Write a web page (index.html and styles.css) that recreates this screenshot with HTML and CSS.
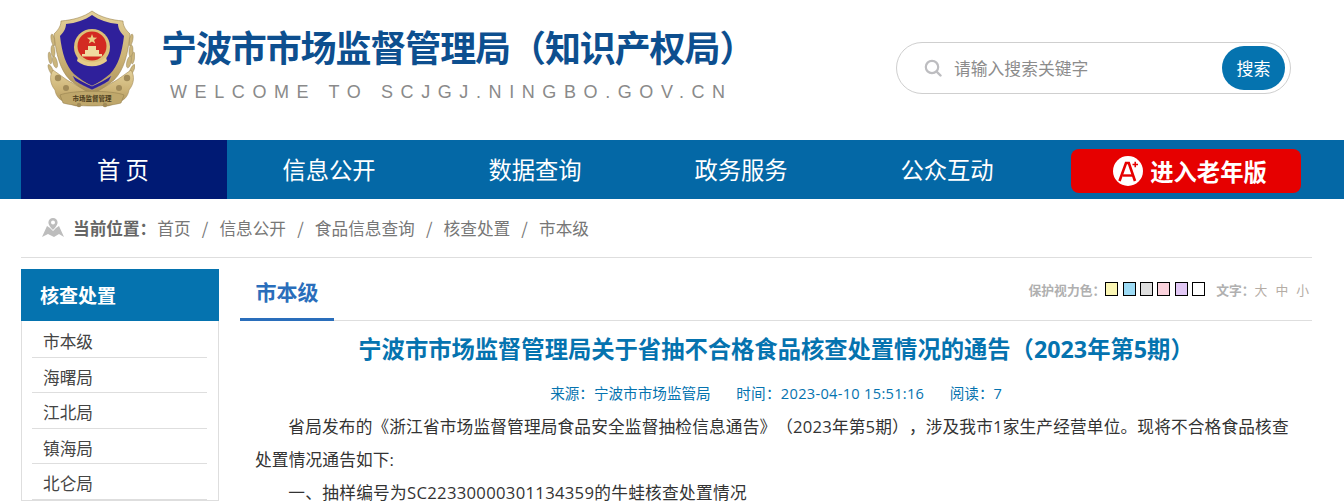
FILE: index.html
```html
<!DOCTYPE html>
<html lang="zh-CN">
<head>
<meta charset="utf-8">
<title>宁波市市场监督管理局（知识产权局）</title>
<link rel="stylesheet" href="styles.css">
</head>
<body>
<div class="page">
  <header class="header">
    <svg class="logo" viewBox="0 0 90 100" width="90" height="100" aria-hidden="true">
      <defs>
        <linearGradient id="gold" x1="0" y1="0" x2="0" y2="1">
          <stop offset="0" stop-color="#e3d09a"/><stop offset=".55" stop-color="#cdb477"/><stop offset="1" stop-color="#a98f58"/>
        </linearGradient>
      </defs>
      <g fill="#cbb57c" stroke="#8f7d50" stroke-width=".4">
        <ellipse cx="8" cy="30" rx="1.800" ry="6" transform="rotate(-12 8 30)"/>
        <ellipse cx="8" cy="41" rx="2" ry="6" transform="rotate(-4 8 41)"/>
        <ellipse cx="10" cy="52" rx="2.200" ry="6" transform="rotate(-14 10 52)"/>
        <ellipse cx="5" cy="48" rx="1.600" ry="6" transform="rotate(-8 5 48)"/>
        <ellipse cx="6" cy="60" rx="1.800" ry="6" transform="rotate(-25 6 60)"/>
        <ellipse cx="86" cy="30" rx="1.800" ry="6" transform="rotate(12 86 30)"/>
        <ellipse cx="86" cy="41" rx="2" ry="6" transform="rotate(4 86 41)"/>
        <ellipse cx="84" cy="52" rx="2.200" ry="6" transform="rotate(14 84 52)"/>
        <ellipse cx="88" cy="48" rx="1.600" ry="6" transform="rotate(8 88 48)"/>
        <ellipse cx="87" cy="60" rx="1.800" ry="6" transform="rotate(25 87 60)"/>
      </g>
      <path d="M8 60C4 66 5 74 10 80C11 87 16 92 23 92C29 97 35 97 39 94L55 94C59 97 65 97 71 92C78 92 83 87 84 80C89 74 90 66 86 60L72 70 47 84 22 70Z" fill="url(#gold)" stroke="#a28a55" stroke-width=".6"/>
      <path d="M47 1C39 7 28 10 16 11C16 17 12 21 9 24C11 44 15 60 25 70C32 76 41 81 47 84C53 81 62 76 69 70C79 60 83 44 85 24C82 21 78 17 78 11C66 10 55 7 47 1Z" fill="url(#gold)" stroke="#9c8450" stroke-width=".6"/>
      <path d="M47 5C40 10 31 13 21 14C21 19 18 23 15 26C17 43 21 56 29 64C35 69 41 73 47 76C53 73 59 69 65 64C73 56 77 43 79 26C76 23 73 19 73 14C63 13 54 10 47 5Z" fill="#2f209b"/>
      <circle cx="47" cy="37" r="18" fill="#dcc078"/>
      <circle cx="47" cy="36" r="14.500" fill="#d32a22"/>
      <path d="M47 24l1.300 3.600 3.800.1-3 2.300 1.100 3.600-3.200-2.100-3.200 2.100 1.100-3.600-3-2.300 3.800-.1Z" fill="#ecd083"/>
      <path d="M37 44h20v2.500H37zM40 40h14v4H40zM43 36h8v4h-8z" fill="#f0dba0"/>
      <path d="M33 47c7 7 21 7 28 0l1 4c-8 7-22 7-30 0z" fill="#e6cc88"/>
      <path d="M27 65c7 5 13 8 20 11 7-3 13-6 20-11l-3 6c-6 4-11 6-17 9-6-3-11-5-17-9z" fill="#2f209b" stroke="#d9c082" stroke-width=".5"/>
      <path d="M15 85c12-5 52-5 64 0l-3 8c-12 4-46 4-58 0z" fill="#bfa76b" stroke="#8f7a4b" stroke-width=".5"/>
      <text class="logo-text" x="47" y="90.500" text-anchor="middle">市场监督管理</text>
      <circle cx="13" cy="68" r="3.200" fill="#a08a58"/><circle cx="82" cy="68" r="3.200" fill="#a08a58"/>
      <circle cx="21" cy="78" r="3" fill="#a08a58"/><circle cx="74" cy="78" r="3" fill="#a08a58"/>
      <circle cx="34" cy="95" r="2.200" fill="#a08a58"/><circle cx="60" cy="95" r="2.200" fill="#a08a58"/>
    </svg>
    <div class="brand">
      <h1 class="brand-title">宁波市市场监督管理局（知识产权局）</h1>
      <p class="brand-sub">WELCOME TO SCJGJ.NINGBO.GOV.CN</p>
    </div>
    <form class="search">
      <svg class="search-icon" viewBox="0 0 18 18" width="18" height="18" aria-hidden="true">
        <circle cx="8" cy="8" r="6.200" fill="none" stroke="#bdbdc0" stroke-width="2.200"/>
        <path d="M12.500 12.500L16.500 16.500" stroke="#bdbdc0" stroke-width="2.400" stroke-linecap="round"/>
      </svg>
      <span class="search-text">请输入搜索关键字</span>
      <span class="search-btn">搜索</span>
    </form>
  </header>

  <nav class="nav">
    <div class="nav-inner">
      <a class="nav-item active">首 页</a>
      <a class="nav-item">信息公开</a>
      <a class="nav-item">数据查询</a>
      <a class="nav-item">政务服务</a>
      <a class="nav-item">公众互动</a>
      <a class="elder">
        <svg class="elder-icon" viewBox="0 0 30 30" width="30" height="30" aria-hidden="true">
          <circle cx="15" cy="15" r="15" fill="#fff"/>
          <path d="M6.500 25L13 7h2.800L22 25" fill="none" stroke="#e60000" stroke-width="2.600"/>
          <path d="M9.500 19.500h10" stroke="#e60000" stroke-width="2.400"/>
          <path d="M19.500 8.500h5.500M22.250 5.750v5.500" stroke="#e60000" stroke-width="1.600"/>
        </svg>
        <span>进入老年版</span>
      </a>
    </div>
  </nav>

  <div class="wrap">
    <div class="crumbs">
      <svg class="crumb-icon" viewBox="0 0 22 20" width="22" height="20" aria-hidden="true">
        <path d="M0 19L5 8l3 2 2 2 1 1 3-3 3-2 5 11-5-3-5 3-6-3z" fill="#bdbdbd"/>
        <path d="M11 0a4.600 4.600 0 0 0-4.600 4.600C6.400 8 11 12 11 12s4.600-4 4.600-7.400A4.600 4.600 0 0 0 11 0zm0 6.600a2 2 0 1 1 0-4 2 2 0 0 1 0 4z" fill="#bdbdbd"/>
      </svg>
      <b class="crumb-label">当前位置：</b>
      <span>首页</span><i>/</i><span>信息公开</span><i>/</i><span>食品信息查询</span><i>/</i><span>核查处置</span><i>/</i><span>市本级</span>
    </div>

    <div class="columns">
      <aside class="side">
        <h2 class="side-head">核查处置</h2>
        <ul class="side-list">
          <li>市本级</li>
          <li>海曙局</li>
          <li>江北局</li>
          <li>镇海局</li>
          <li>北仑局</li>
        </ul>
      </aside>
      <main class="main">
        <div class="tabbar">
          <span class="tab">市本级</span>
          <div class="tools">
            <b>保护视力色：</b>
            <span class="swatches">
              <i class="sw sw-y"></i><i class="sw sw-b"></i><i class="sw sw-g"></i><i class="sw sw-p"></i><i class="sw sw-v"></i><i class="sw sw-w"></i>
            </span>
            <b class="font-label">文字：</b>
            <span class="sizes"><span>大</span><span>中</span><span>小</span></span>
          </div>
        </div>
        <h3 class="title">宁波市市场监督管理局关于省抽不合格食品核查处置情况的通告（2023年第5期）</h3>
        <p class="meta"><span>来源：宁波市市场监管局</span><span class="meta-time">时间：2023-04-10 15:51:16</span><span>阅读：7</span></p>
        <div class="body">
          <p>省局发布的《浙江省市场监督管理局食品安全监督抽检信息通告》（2023年第5期），涉及我市1家生产经营单位。现将不合格食品核查处置情况通告如下:</p>
          <p>一、抽样编号为SC22330000301134359的牛蛙核查处置情况</p>
        </div>
      </main>
    </div>
  </div>
</div>
</body>
</html>
```
FILE: styles.css
```css
* { box-sizing: border-box; }
html, body { margin: 0; padding: 0; }
body { font-family: "Noto Sans CJK SC", "Liberation Sans", sans-serif; background: #fff; color: #333; text-spacing-trim: space-all; }
.page { height: 502px; overflow: hidden; }
h1, h2, h3, p, ul { margin: 0; padding: 0; }
ul { list-style: none; }
i { font-style: normal; }

.header { height: 140px; display: flex; align-items: flex-start; padding-left: 45px; }
.logo { margin-top: 10px; flex: none; }
.logo-text { font-size: 6.500px; fill: #4b3c1c; font-weight: 700; }
.brand { margin-left: 26px; margin-top: 22px; width: 622px; }
.brand-title { font-size: 36px; line-height: 48px; font-weight: 700; color: #0d4f8f; letter-spacing: -1.100px; white-space: nowrap; }
.brand-sub { margin-top: 12px; margin-left: 9px; font-family: "Liberation Sans", sans-serif; font-size: 18px; line-height: 20px; letter-spacing: 7.600px; color: #8a8a8a; white-space: nowrap; }
.search { margin-left: 113px; margin-top: 42px; width: 395px; height: 52px; border: 1px solid #cfcfcf; border-radius: 26px; display: flex; align-items: center; padding: 0 5px 0 27px; }
.search-icon { flex: none; }
.search-text { margin-left: 12px; flex: 1; font-size: 16.800px; color: #8c8c8c; }
.search-btn { width: 63px; height: 44px; border-radius: 22px; background: #0573af; color: #fff; font-size: 17px; text-align: center; line-height: 44px; }

.nav { height: 59px; background: #0468a6; }
.nav-inner { height: 100%; padding-left: 21px; display: flex; align-items: center; }
.nav-item { width: 206px; height: 100%; color: #fff; font-size: 23.300px; line-height: 59px; text-align: center; padding-right: 2px; }
.nav-item.active { background: #001a74; }
.elder { margin: 2px 0 0 20px; width: 230px; height: 44px; background: #e60000; border-radius: 8px; color: #fff; font-size: 23.300px; font-weight: 700; display: flex; align-items: center; justify-content: center; gap: 7px; padding-left: 8px; }
.elder-icon { flex: none; }

.wrap { padding-left: 21px; width: 1312px; }
.crumbs { height: 59px; border-bottom: 1px solid #dedede; display: flex; align-items: center; padding-left: 21px; font-size: 16.670px; color: #777; }
.crumb-icon { flex: none; margin-right: 9px; }
.crumb-label { color: #666; font-weight: 700; margin-right: 1px; }
.crumbs i { margin: 0 11.150px; }

.columns { display: flex; margin-top: 11px; align-items: flex-start; }
.side { width: 198px; flex: none; }
.side-head { height: 52px; background: #0573af; color: #fff; font-size: 19px; line-height: 52px; font-weight: 700; padding-left: 19px; }
.side-list { border: 1px solid #dedede; border-top: 0; padding: 1px 11px 0 10px; }
.side-list li { height: 35.500px; padding-top: 2px; line-height: 34px; border-bottom: 1px solid #dedede; font-size: 16.670px; color: #444; padding-left: 11px; }

.main { margin-left: 21px; width: 1072px; font-family: "Open Sans", "Noto Sans CJK SC", sans-serif; }
.tabbar { height: 52px; border-bottom: 1px solid #dedede; display: flex; justify-content: space-between; }
.tab { width: 94px; height: 52px; border-bottom: 3px solid #2a6ebb; color: #2a6ebb; font-size: 21px; font-weight: 700; text-align: center; line-height: 46px; }
.tools { display: flex; align-items: center; height: 40px; font-size: 12.800px; color: #b0b0b0; padding-right: 3px; }
.tools b { font-weight: 700; }
.swatches { display: flex; gap: 4.400px; }
.sw { width: 13px; height: 14px; border: 1px solid #000; display: block; }
.sw-y { background: #fbf6b4; }
.sw-b { background: #9ddbf5; }
.sw-g { background: #dedede; }
.sw-p { background: #fad2dc; }
.sw-v { background: #e2c8f5; }
.sw-w { background: #fff; }
.font-label { margin-left: 11px; }
.sizes { display: flex; gap: 8px; color: #b5ada5; }

.title { margin-top: 10px; text-align: center; font-size: 23.300px; line-height: 36px; font-weight: 700; color: #0573af; white-space: nowrap; }
.meta { margin-top: 16px; display: flex; justify-content: center; gap: 25.500px; font-size: 14.600px; line-height: 20px; color: #0573af; }
.meta-time { letter-spacing: .3px; }
.body { margin-top: 7px; padding: 0 15px; font-size: 16.670px; line-height: 33px; color: #333; }
.body p { text-indent: 2em; letter-spacing: .3px; }
.body p:first-child { letter-spacing: .17px; }
```
